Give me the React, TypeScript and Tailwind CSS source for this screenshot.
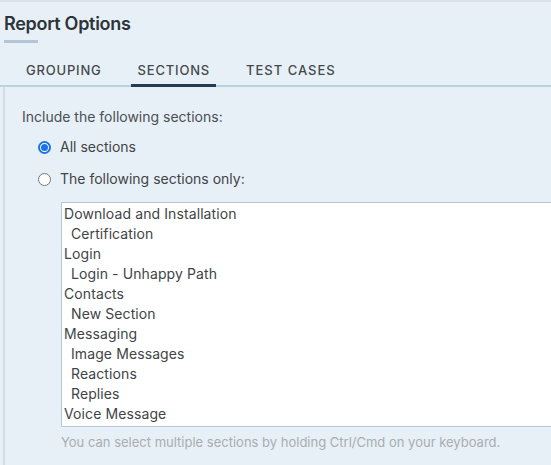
import React from "react";

const items: { label: string; indent?: boolean }[] = [
  { label: "Download and Installation" },
  { label: "Certification", indent: true },
  { label: "Login" },
  { label: "Login - Unhappy Path", indent: true },
  { label: "Contacts" },
  { label: "New Section", indent: true },
  { label: "Messaging" },
  { label: "Image Messages", indent: true },
  { label: "Reactions", indent: true },
  { label: "Replies", indent: true },
  { label: "Voice Message" },
];

export default function App() {
  return (
    <div
      className="w-[551px] h-[465px] overflow-hidden bg-[#e8f0f7] text-[#3f4448] border-t-2 border-[#dde3e8]"
      style={{ fontFamily: "Inter, Roboto, 'Liberation Sans', sans-serif" }}
    >
      <div className="pl-[4px] pt-[10px]">
        <h1 className="text-[18px] font-semibold leading-[24px] text-[#2d3338] tracking-[-0.3px]">Report Options</h1>
        <div className="mt-[4px] w-[34px] h-[3px] bg-[#b3c5d6]" />
      </div>
      <div className="flex mt-[18px] border-b-2 border-[#b9d2de] pl-[26px] gap-[36px] text-[13px] tracking-[0.8px] font-medium text-[#45494d]">
        <div className="pt-[1px] pb-[6px] leading-[17px]">GROUPING</div>
        <div className="relative pt-[1px] pb-[6px] leading-[17px]">
          SECTIONS
          <div className="absolute left-[-7px] right-[-6px] bottom-[-2px] h-[3px] bg-[#243b53]" />
        </div>
        <div className="pt-[1px] pb-[6px] leading-[17px] tracking-[1px]">TEST CASES</div>
      </div>
      <div className="ml-[3px] border-l-2 border-[#d5dce2] h-full pl-[17px] pt-[21px] text-[14px]">
        <div className="leading-[18px] text-[#4a4f54]">Include the following sections:</div>
        <div className="mt-[11px] ml-[16px] flex items-center gap-[9px] leading-[20px]">
          <span className="w-[13px] h-[13px] rounded-full border-2 border-[#1a73e8] flex items-center justify-center bg-white">
            <span className="w-[7px] h-[7px] rounded-full bg-[#1a73e8]" />
          </span>
          <span>All sections</span>
        </div>
        <div className="mt-[12px] ml-[16px] flex items-center gap-[9px] leading-[20px]">
          <span className="w-[13px] h-[13px] rounded-full border border-[#767676] bg-white" />
          <span>The following sections only:</span>
        </div>
        <div className="mt-[13px] ml-[39px] w-[520px] h-[225px] bg-white border border-[#b3c9db] pt-[1px] pl-[2px] text-[14px] tracking-[0.1px]">
          {items.map((it) => (
            <div key={it.label} className={`leading-[20px] text-[#404448] ${it.indent ? "pl-[7px]" : ""}`}>
              {it.label}
            </div>
          ))}
        </div>
        <div className="mt-[7px] ml-[39px] text-[13px] text-[#a9adb1] leading-[16px]">
          You can select multiple sections by holding Ctrl/Cmd on your keyboard.
        </div>
      </div>
    </div>
  );
}
